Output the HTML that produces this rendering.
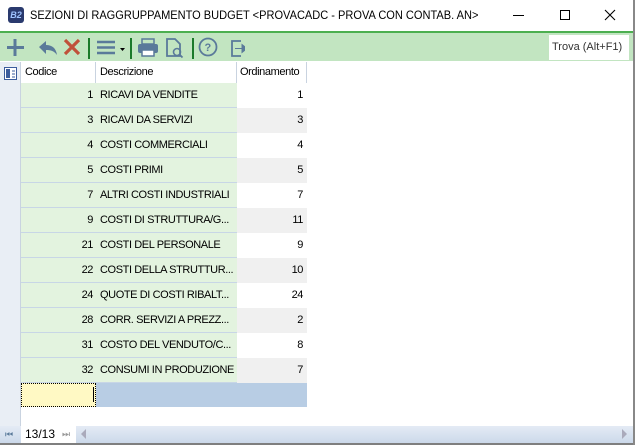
<!DOCTYPE html>
<html><head><meta charset="utf-8"><style>
*{margin:0;padding:0;box-sizing:border-box}
body{width:635px;height:445px;overflow:hidden;background:#fff;font-family:"Liberation Sans",Tahoma,sans-serif;position:relative}
.abs{position:absolute}
.title{left:0;top:0;width:635px;height:31px;background:#fff;font-size:13px;color:#000}
.tb{left:0;top:31px;width:633px;height:30px;background:#c2e5c1;border-top:2px solid #4caf50}
.sep{position:absolute;top:5px;width:2px;height:21px;background:#1b7a2a}
.grid{font-size:11px;color:#000;letter-spacing:-0.4px}
.hdr{top:62px;height:22px;background:#fff;border-bottom:1px solid #c9d3e0}
.cell{position:absolute;height:25px;line-height:24px;white-space:nowrap;overflow:hidden}
</style></head><body>
<div class="abs title">
  <div class="abs" style="left:8px;top:7px;width:16px;height:16px;background:#2a3a6e;border-radius:3px;color:#9fc3ff;font-size:9px;font-style:italic;font-weight:bold;line-height:16px;text-align:center">B2</div>
  <div class="abs" style="left:30px;top:8px;font-size:12px;white-space:nowrap;transform:scaleX(0.92);transform-origin:0 0">SEZIONI DI RAGGRUPPAMENTO BUDGET &lt;PROVACADC - PROVA CON CONTAB. AN&gt;</div>
  <div class="abs" style="left:513px;top:15px;width:11px;height:1px;background:#000"></div>
  <div class="abs" style="left:560px;top:10px;width:10px;height:10px;border:1px solid #000"></div>
  <svg class="abs" style="left:604px;top:9px" width="12" height="12"><path d="M1 1L11 11M11 1L1 11" stroke="#000" stroke-width="1.1"/></svg>
</div>
<div class="abs tb">
  <svg class="abs" style="left:5px;top:3px" width="240" height="24">
    <path d="M10 3v17M2 11.5h17" stroke="#5a7a9a" stroke-width="3"/>
    <path d="M34 11 l7-6 v4 c6 0 10 3 11 10 c-3-4-6-5-11-5 v4z" fill="#5a7a9a"/>
    <path d="M60 4l14 14M74 4L60 18" stroke="#c0513a" stroke-width="3.2"/>
    <path d="M92 6h18M92 11.5h18M92 17h18" stroke="#5a7a9a" stroke-width="2.6"/>
    <path d="M115 12h5l-2.5 3z" fill="#000"/>
    <rect x="133" y="8" width="20" height="9" rx="2" fill="#5a7a9a"/><rect x="137" y="3" width="12" height="5" fill="none" stroke="#5a7a9a" stroke-width="1.5"/><rect x="137" y="14" width="12" height="6" fill="#fff" stroke="#5a7a9a" stroke-width="1.5"/>
    <path d="M162 3h8l5 5v12h-13z" fill="none" stroke="#5a7a9a" stroke-width="1.8"/><circle cx="172" cy="16" r="3.5" fill="none" stroke="#5a7a9a" stroke-width="1.6"/><path d="M174.5 18.5l3 3" stroke="#5a7a9a" stroke-width="1.8"/>
    <circle cx="203" cy="11" r="8.5" fill="none" stroke="#5a7a9a" stroke-width="1.8"/><text x="199.5" y="15" font-size="11" font-weight="bold" fill="#5a7a9a" font-family="Liberation Sans">?</text>
    <path d="M236 5h-9v15h9" fill="none" stroke="#5a7a9a" stroke-width="1.8"/><path d="M230 12.5h7v-4l5 4-5 4v-4" fill="#5a7a9a" stroke="#5a7a9a"/>
  </svg>
  <div class="sep" style="left:88px"></div>
  <div class="sep" style="left:130px"></div>
  <div class="sep" style="left:192px"></div>
  <div class="abs" style="left:549px;top:2px;width:80px;height:25px;background:#fff;font-size:11px;color:#333;line-height:25px;padding-left:3px">Trova (Alt+F1)</div>
</div>
<div class="abs" style="left:0;top:62px;width:21px;height:364px;background:#e9eef5;border-right:1px solid #c9d3e0"></div>
<svg class="abs" style="left:4px;top:67px" width="13" height="13"><rect x="0.5" y="0.5" width="12" height="12" fill="#fff" stroke="#3b5c9c"/><rect x="2" y="2" width="4" height="9" fill="#3b5c9c"/><path d="M8 4h3M8 7h3M8 10h3" stroke="#3b5c9c"/></svg>
<div class="abs grid hdr" style="left:21px;width:286px">
  <div class="cell" style="left:0;width:75px;height:22px;line-height:21px;padding-left:4px;border-right:1px solid #c9d3e0">Codice</div>
  <div class="cell" style="left:75px;width:141px;height:22px;line-height:21px;padding-left:4px;border-right:1px solid #c9d3e0">Descrizione</div>
  <div class="cell" style="left:216px;width:70px;height:22px;line-height:21px;padding-left:3px;border-right:1px solid #c9d3e0">Ordinamento</div>
</div>
<div id="rows" class="abs grid" style="left:21px;top:83px;width:286px"></div>
<div class="abs" style="left:21px;top:383px;width:75px;height:24px;background:#fff9c4;border:1px dotted #000"></div>
<div class="abs" style="left:93px;top:387px;width:1px;height:15px;background:#000"></div>
<div class="abs" style="left:96px;top:383px;width:211px;height:24px;background:#b8cde4"></div>
<div class="abs" style="left:0;top:426px;width:633px;height:17px;background:linear-gradient(#e4ebf5,#ccd9ea)"></div>
<div class="abs" style="left:21px;top:426px;width:55px;height:17px;background:#fff;font-size:12px;line-height:17px;padding-left:4px">13/13</div>
<div class="abs" style="left:5px;top:427px;font-size:9px;color:#5a7a9a;line-height:15px">&#9198;</div>
<div class="abs" style="left:62px;top:427px;font-size:9px;color:#999;line-height:15px">&#9197;</div>
<svg class="abs" style="left:81px;top:429px" width="6" height="10"><path d="M5 0v10L0 5z" fill="#aab"/></svg>
<svg class="abs" style="left:622px;top:429px" width="6" height="10"><path d="M0 0v10L5 5z" fill="#aab"/></svg>
<div class="abs" style="left:0;top:443px;width:635px;height:2px;background:#7f7f7f"></div>
<div class="abs" style="left:633px;top:0;width:2px;height:445px;background:#888"></div>
<script>
var d=[[1,"RICAVI DA VENDITE",1],[3,"RICAVI DA SERVIZI",3],[4,"COSTI COMMERCIALI",4],[5,"COSTI PRIMI",5],[7,"ALTRI COSTI INDUSTRIALI",7],[9,"COSTI DI STRUTTURA/G...",11],[21,"COSTI DEL PERSONALE",9],[22,"COSTI DELLA STRUTTUR...",10],[24,"QUOTE DI COSTI RIBALT...",24],[28,"CORR. SERVIZI A PREZZ...",2],[31,"COSTO DEL VENDUTO/C...",8],[32,"CONSUMI IN PRODUZIONE",7]];
var h="";d.forEach(function(r,i){var t=i*25;var bg=i%2?"#f0f0f0":"#fff";
h+='<div class="cell" style="top:'+t+'px;left:0;width:216px;background:#e3f3df;border-bottom:1px solid #c8d6e6"></div>';
h+='<div class="cell" style="top:'+t+'px;left:0;width:75px;text-align:right;padding-right:3px">'+r[0]+'</div>';
h+='<div class="cell" style="top:'+t+'px;left:75px;width:141px;padding-left:4px">'+r[1]+'</div>';
h+='<div class="cell" style="top:'+t+'px;left:216px;width:70px;background:'+bg+';text-align:right;padding-right:4px">'+r[2]+'</div>';});
document.getElementById("rows").innerHTML=h;
</script>
</body></html>
